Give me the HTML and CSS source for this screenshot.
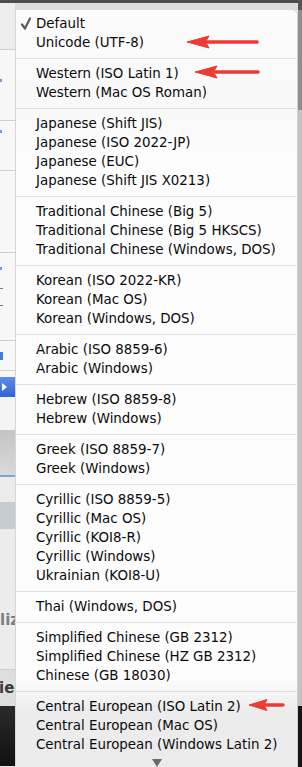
FILE: index.html
```html
<!DOCTYPE html>
<html>
<head>
<meta charset="utf-8">
<link rel="stylesheet" href="styles.css">
</head>
<body>
<div class="screen">
  <div class="bg-left">
    <div class="b b-dark" style="height:3px"></div>
    <div class="b b-top" style="height:46px"></div>
    <div class="b b-line"></div>
    <div class="b b-white" style="height:70px"><i class="dot" style="margin-top:29px"></i></div>
    <div class="b b-line"></div>
    <div class="b b-white" style="height:49px"><i class="dot" style="margin-top:9px"></i></div>
    <div class="b b-line"></div>
    <div class="b b-white" style="height:81px"></div>
    <div class="b b-line"></div>
    <div class="b b-white" style="height:87px"><i class="dot" style="margin-top:14px"></i><i class="dash" style="margin-top:18px"></i><i class="dash" style="margin-top:16px"></i></div>
    <div class="b b-line"></div>
    <div class="b b-white" style="height:29px"><i class="bluebar" style="margin-top:11px"></i></div>
    <div class="b b-line"></div>
    <div class="b b-white" style="height:6px"></div>
    <div class="b b-sel" style="height:20px"><span class="tri"></span></div>
    <div class="b b-win" style="height:33px"></div>
    <div class="b b-shade" style="height:45px"></div>
    <div class="b b-blue" style="height:2px"></div>
    <div class="b b-light" style="height:25px"></div>
    <div class="b b-mid" style="height:27px"></div>
    <div class="b b-light" style="height:140px"><span class="frag frag1">liz</span></div>
    <div class="b b-line"></div>
    <div class="b b-light2" style="height:36px"><span class="frag frag2">ie</span></div>
    <div class="b b-black" style="height:60px"></div>
  </div>
  <div class="menu-col">
    <div class="menu">
      <div class="row"><span class="mark"><svg width="21" height="19" viewBox="0 0 21 19"><path d="M7 10.5 L10 14.5 L15 4.5" fill="none" stroke="#5a5a5a" stroke-width="2.2" stroke-linecap="round" stroke-linejoin="round"/></svg></span>Default</div>
      <div class="row"><span class="mark"></span>Unicode (UTF-8)</div>
      <div class="sep"></div>
      <div class="row"><span class="mark"></span>Western (ISO Latin 1)</div>
      <div class="row"><span class="mark"></span>Western (Mac OS Roman)</div>
      <div class="sep"></div>
      <div class="row"><span class="mark"></span>Japanese (Shift JIS)</div>
      <div class="row"><span class="mark"></span>Japanese (ISO 2022-JP)</div>
      <div class="row"><span class="mark"></span>Japanese (EUC)</div>
      <div class="row"><span class="mark"></span>Japanese (Shift JIS X0213)</div>
      <div class="sep"></div>
      <div class="row"><span class="mark"></span>Traditional Chinese (Big 5)</div>
      <div class="row"><span class="mark"></span>Traditional Chinese (Big 5 HKSCS)</div>
      <div class="row"><span class="mark"></span>Traditional Chinese (Windows, DOS)</div>
      <div class="sep"></div>
      <div class="row"><span class="mark"></span>Korean (ISO 2022-KR)</div>
      <div class="row"><span class="mark"></span>Korean (Mac OS)</div>
      <div class="row"><span class="mark"></span>Korean (Windows, DOS)</div>
      <div class="sep"></div>
      <div class="row"><span class="mark"></span>Arabic (ISO 8859-6)</div>
      <div class="row"><span class="mark"></span>Arabic (Windows)</div>
      <div class="sep"></div>
      <div class="row"><span class="mark"></span>Hebrew (ISO 8859-8)</div>
      <div class="row"><span class="mark"></span>Hebrew (Windows)</div>
      <div class="sep"></div>
      <div class="row"><span class="mark"></span>Greek (ISO 8859-7)</div>
      <div class="row"><span class="mark"></span>Greek (Windows)</div>
      <div class="sep"></div>
      <div class="row"><span class="mark"></span>Cyrillic (ISO 8859-5)</div>
      <div class="row"><span class="mark"></span>Cyrillic (Mac OS)</div>
      <div class="row"><span class="mark"></span>Cyrillic (KOI8-R)</div>
      <div class="row"><span class="mark"></span>Cyrillic (Windows)</div>
      <div class="row"><span class="mark"></span>Ukrainian (KOI8-U)</div>
      <div class="sep"></div>
      <div class="row"><span class="mark"></span>Thai (Windows, DOS)</div>
      <div class="sep"></div>
      <div class="row"><span class="mark"></span>Simplified Chinese (GB 2312)</div>
      <div class="row"><span class="mark"></span>Simplified Chinese (HZ GB 2312)</div>
      <div class="row"><span class="mark"></span>Chinese (GB 18030)</div>
      <div class="sep"></div>
      <div class="row"><span class="mark"></span>Central European (ISO Latin 2)</div>
      <div class="row"><span class="mark"></span>Central European (Mac OS)</div>
      <div class="row"><span class="mark"></span>Central European (Windows Latin 2)</div>
      <div class="scroll-down"><svg width="10" height="9" viewBox="0 0 10 9"><path d="M0 0 H10 L5 8 Z" fill="#6a6a6a"/></svg></div>
    </div>
  </div>
  <div class="bg-right">
    <div class="r r1"></div>
    <div class="r r2"></div>
    <div class="r r3"></div>
    <div class="r r4"></div>
  </div>
</div>

<svg class="arrow arrow1" width="76" height="16" viewBox="0 0 76 16"><g fill="#ea3b35" stroke="#ea3b35"><line x1="20" y1="8" x2="72" y2="8" stroke-width="3.6" stroke-linecap="round"/><path d="M2 8 L24 2 L20.5 8 L24 14 Z" stroke-width="1" stroke-linejoin="round"/></g></svg>
<svg class="arrow arrow2" width="68" height="16" viewBox="0 0 68 16"><g fill="#ea3b35" stroke="#ea3b35"><line x1="20" y1="8" x2="65" y2="8" stroke-width="3.6" stroke-linecap="round"/><path d="M2 8 L24 2 L20.5 8 L24 14 Z" stroke-width="1" stroke-linejoin="round"/></g></svg>
<svg class="arrow arrow3" width="40" height="16" viewBox="0 0 40 16"><g fill="#ea3b35" stroke="#ea3b35"><line x1="17" y1="8" x2="36" y2="8" stroke-width="3.4" stroke-linecap="round"/><path d="M2 8 L20 2.5 L17 8 L20 13.5 Z" stroke-width="1" stroke-linejoin="round"/></g></svg>
</body>
</html>
```

FILE: styles.css
```css
html, body {
  margin: 0;
  padding: 0;
}
body {
  width: 302px;
  height: 767px;
  overflow: hidden;
  position: relative;
  background: #e6e6e6;
  font-family: "DejaVu Sans", "Liberation Sans", sans-serif;
}
.screen {
  display: grid;
  grid-template-columns: 15px 283px 4px;
  height: 767px;
  overflow: hidden;
}
.bg-left {
  display: flex;
  flex-direction: column;
  overflow: hidden;
}
.b {
  flex: none;
  display: flex;
  flex-direction: column;
  overflow: hidden;
}
.b-dark { background: #4d4d4d; }
.b-top { background: #eeeeee; }
.b-line { height: 1px; background: #cfcfcf; }
.b-white { background: #f7f7f7; }
.b-sel { background: linear-gradient(#5e8ee6, #2f63d6); }
.b-win { background: #f4f4f4; }
.b-shade { background: linear-gradient(#c4c4c4, #dadada); }
.b-blue { background: #7aa3dc; }
.b-light { background: #ececec; }
.b-mid { background: #c7cbd2; }
.b-light2 { background: #dedede; }
.b-black { background: linear-gradient(#2a2a2a, #111111); }
.dot { display: block; width: 2px; height: 3px; background: #6fa0e0; }
.dash { display: block; width: 3px; height: 1px; background: #777; }
.bluebar { display: block; width: 3px; height: 8px; background: #3d7ed8; }
.tri {
  width: 0; height: 0;
  margin: 6px 0 0 2px;
  border-left: 5px solid #ffffff;
  border-top: 4px solid transparent;
  border-bottom: 4px solid transparent;
}
.frag {
  font-family: "DejaVu Sans", sans-serif;
  font-weight: bold;
  font-size: 15px;
  line-height: 18px;
  white-space: nowrap;
}
.frag1 { color: #7d7d7d; margin-top: 82px; }
.frag2 { color: #3a3a3a; margin-top: 9px; margin-left: -1px; }

.menu-col {
  padding-top: 10px;
  background: linear-gradient(#4d4d4d 0 3px, #dcdcdc 3px 10px, transparent 10px);
  overflow: hidden;
}
.menu {
  background: linear-gradient(#fbfbfb 0, #f8f8f8 100px, #fcfcfc 140px, #fcfcfc 670px, #ececec 700px, #ebebeb 100%);
  border-top-right-radius: 5px;
  box-shadow: inset 1px 0 0 #d6d6d6, inset -1px 0 0 #d0d0d0;
  padding-top: 3.5px;
  color: #0a0a0a;
  font-size: 13.4px;
}
.row {
  display: flex;
  align-items: center;
  height: 19px;
  line-height: 19px;
  white-space: nowrap;
}
.mark {
  flex: none;
  width: 21px;
  height: 19px;
  display: flex;
}
.sep {
  height: 1px;
  margin: 6px 0 5px;
  background: #e0e0e0;
}
.scroll-down {
  height: 14px;
  display: flex;
  justify-content: center;
  align-items: flex-end;
}

.bg-right {
  display: flex;
  flex-direction: column;
}
.r { flex: none; }
.r1 { height: 10px; background: #555555; }
.r2 { height: 100px; background: #8e8e8e; }
.r3 { height: 596px; background: #c2c2c2; }
.r4 { height: 61px; background: #151515; }

.arrow {
  position: absolute;
}
.arrow1 { left: 185px; top: 34px; }
.arrow2 { left: 193px; top: 64px; }
.arrow3 { left: 247px; top: 697px; }
```
